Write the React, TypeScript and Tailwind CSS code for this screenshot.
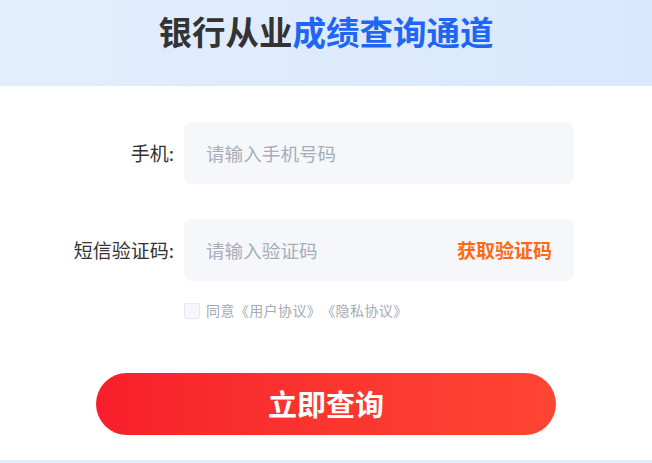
export default function App() {
  return (
    <div className="w-[652px] h-[463px] bg-white flex flex-col font-['Noto_Sans_CJK_SC','Noto_Sans',sans-serif] overflow-hidden">
      {/* Header */}
      <div className="h-[86px] shrink-0 bg-gradient-to-r from-[#e3eefd] to-[#d9e8fd] flex justify-center pt-[9px]">
        <h1 className="text-[33.5px] leading-[44px] font-bold text-[#333333]">
          银行从业<span className="text-[#1f66f6]">成绩查询通道</span>
        </h1>
      </div>

      {/* Form */}
      <div className="flex flex-col pt-[36px] pl-[64px]">
        <div className="flex items-center gap-[10px]">
          <label className="w-[110px] text-right text-[19px] text-[#333333]">手机:</label>
          <div className="w-[390px] h-[62px] rounded-[8px] bg-[#f5f7fb] flex items-center px-[22px]">
            <span className="text-[18.6px] text-[#a7adba]">请输入手机号码</span>
          </div>
        </div>
        <div className="flex items-center gap-[10px] mt-[35px]">
          <label className="w-[110px] text-right text-[19px] text-[#333333]">短信验证码:</label>
          <div className="w-[390px] h-[62px] rounded-[8px] bg-[#f5f7fb] flex items-center justify-between pl-[22px] pr-[22px]">
            <span className="text-[18.6px] text-[#a7adba]">请输入验证码</span>
            <span className="text-[19px] font-bold text-[#ff6a10]">获取验证码</span>
          </div>
        </div>
        <div className="flex items-center gap-[6px] ml-[120px] mt-[19px]">
          <span className="w-[16px] h-[16px] rounded-[2px] border border-[#e4e8f0] bg-[#f5f7fb]" />
          <div className="flex text-[14px] tracking-[0.4px] text-[#a3aab8]">
            <span>同意</span>
            <span>《用户协议》</span>
            <span>《隐私协议》</span>
          </div>
        </div>
      </div>

      <div className="flex justify-center mt-[52px]">
        <button className="w-[460px] h-[62px] rounded-full bg-gradient-to-r from-[#f71e2b] to-[#fe4533] text-white text-[29px] font-bold">
          立即查询
        </button>
      </div>

      <div className="mt-auto h-[3px] bg-[#e3eefd]" />
    </div>
  );
}
